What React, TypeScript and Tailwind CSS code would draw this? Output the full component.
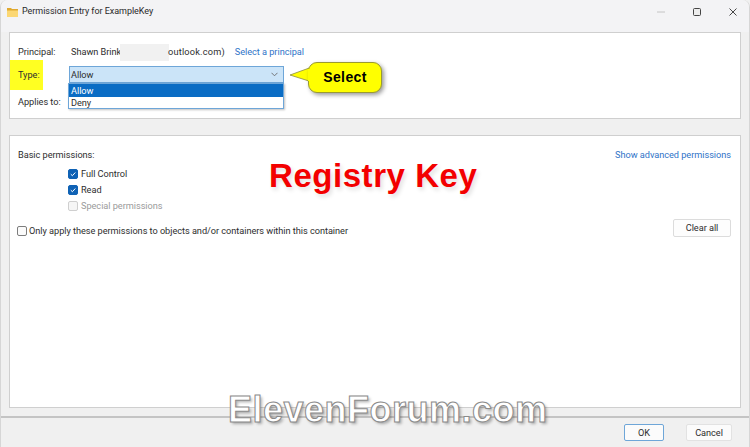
import React from "react";

const font = "font-['Roboto','Noto_Sans',sans-serif]";

const Check = ({ checked, disabled }: { checked?: boolean; disabled?: boolean }) => (
  <span
    className={`flex h-[10px] w-[10px] shrink-0 items-center justify-center rounded-[2px] border ${
      checked ? "border-[#0f62b5] bg-[#0f62b5]" : disabled ? "border-[#cfcfcf] bg-[#f6f6f6]" : "border-[#7d7d7d] bg-[#fbfbfb]"
    }`}
  >
    {checked && (
      <svg width="8" height="8" viewBox="0 0 8 8" fill="none">
        <path d="M1.8 4.2 3.4 5.7 6.3 2.5" stroke="#fff" strokeWidth="1" />
      </svg>
    )}
  </span>
);

const TitleBar = () => (
  <div className="flex h-[32px] items-center rounded-t-[7px] bg-[#f3f3f5] pb-[8px] pl-[6px] pr-[12px]">
    <svg width="11" height="9" viewBox="0 0 11 9" className="mr-[4px]">
      <path d="M0 0h4l1 1h6v2H0z" fill="#e0a92f" />
      <path d="M0 2.5h11V9H0z" fill="#fbd774" />
    </svg>
    <span className="text-[9px] text-[#2a2a2a]">Permission Entry for ExampleKey</span>
    <div className="ml-auto flex items-center">
      <svg width="8" height="2" viewBox="0 0 8 2" className="mr-[28px]">
        <path d="M0 1h8" stroke="#c4c4c4" strokeWidth="1" />
      </svg>
      <svg width="8" height="8" viewBox="0 0 8 8" className="mr-[28px]">
        <rect x="0.5" y="0.5" width="7" height="7" rx="1" fill="#ececec" stroke="#444" strokeWidth="1" />
      </svg>
      <svg width="8" height="8" viewBox="0 0 8 8">
        <path d="M0.5 0.5 7.5 7.5M7.5 0.5 0.5 7.5" stroke="#333" strokeWidth="0.9" />
      </svg>
    </div>
  </div>
);

export default function App() {
  return (
    <div className={`relative h-[447px] w-[750px] overflow-hidden bg-[#f0f0f0] text-[9.2px] tracking-[-0.04px] text-[#2e2e2e] ${font}`}>
      <div className="flex h-full flex-col rounded-t-[7px] border-x border-[#d6d6d6]">
        <TitleBar />

        <section className="mx-[8px] h-[87px] border border-[#cfcfcf] bg-white pl-[8px] pt-[12px]">
          <div className="flex h-[14px] items-center whitespace-nowrap">
            <span className="w-[53px]">Principal:</span>
            <span className="w-[49px]">Shawn Brink</span>
            <span className="h-[17px] w-[49px] bg-[#f1f1f1]" />
            <span className="-ml-[1px] tracking-[0.2px]">outlook.com)</span>
            <span className="ml-[10px] text-[#2f74c8]">Select a principal</span>
          </div>
          <div className="mt-[7px] flex h-[17px] items-center">
            <span className="w-[51px]">Type:</span>
            <div className="flex h-[17px] w-[215px] items-center justify-between border border-[#6ea6d8] bg-[#cbe4f8] pl-[1px] pr-[5px]">
              <span>Allow</span>
              <svg width="7" height="5" viewBox="0 0 7 5" fill="none">
                <path d="M0.5 0.8 3.5 3.8 6.5 0.8" stroke="#6a6a6a" strokeWidth="0.9" />
              </svg>
            </div>
          </div>
          <div className="mt-[12px] flex h-[14px] items-center">
            <span>Applies to:</span>
          </div>
        </section>

        <section className="mx-[8px] mt-[16px] h-[273px] border border-[#cfcfcf] bg-white pl-[8px] pr-[9px] pt-[12px]">
          <div className="flex h-[14px] items-center justify-between">
            <span>Basic permissions:</span>
            <span className="text-[#2f74c8]">Show advanced permissions</span>
          </div>
          <div className="ml-[50px] mt-[5px] flex flex-col gap-[3px]">
            <label className="flex h-[13px] items-center gap-[3px]">
              <Check checked />
              <span>Full Control</span>
            </label>
            <label className="flex h-[13px] items-center gap-[3px]">
              <Check checked />
              <span>Read</span>
            </label>
            <label className="flex h-[13px] items-center gap-[3px] text-[#9b9b9b]">
              <Check disabled />
              <span>Special permissions</span>
            </label>
          </div>
          <div className="mt-[7px] flex items-start justify-between">
            <label className="-ml-[1px] mt-[5px] flex items-center gap-[2px]">
              <Check />
              <span>Only apply these permissions to objects and/or containers within this container</span>
            </label>
            <button className="flex h-[18px] w-[58px] items-center justify-center rounded-[2px] border border-[#dcdcdc] bg-[#fdfdfd]">
              Clear all
            </button>
          </div>
        </section>

        <footer className="mt-[8px] flex flex-1 items-start justify-end gap-[22px] border-t-2 border-[#c4c4c4] pr-[17px] pt-[6px]">
          <button className="flex h-[17px] w-[40px] items-center justify-center rounded-[2px] border border-[#6ea6d8] bg-[#fbfbfb]">
            OK
          </button>
          <button className="flex h-[17px] w-[46px] items-center justify-center rounded-[2px] border border-[#e2e2e2] bg-[#fbfbfb]">
            Cancel
          </button>
        </footer>
      </div>

      {/* annotations drawn over the dialog */}
      <div className="absolute left-[10px] top-[60px] flex h-[30px] w-[33px] items-center bg-[#ffff22] pl-[8px]">
        <span>Type:</span>
      </div>

      <div className="absolute left-[68px] top-[83px] flex h-[26px] w-[216px] flex-col border border-[#6ea6d8] bg-white shadow-[1px_1px_2px_rgba(0,0,0,0.25)]">
        <div className="flex h-[13px] items-center bg-[#0a6cc4] pl-[2px] text-white">Allow</div>
        <div className="flex h-[12px] items-center pl-[2px]">Deny</div>
      </div>

      <svg width="24" height="22" viewBox="0 0 24 22" className="absolute left-[289px] top-[64px]">
        <path d="M23 3 1 11 23 18Z" fill="#ffff00" stroke="#8a8a40" strokeWidth="0.8" />
      </svg>
      <div className="absolute left-[308px] top-[62px] flex h-[31px] w-[74px] items-center justify-center rounded-[9px] border border-[#9a9a30] bg-[#ffff00] font-['Liberation_Sans',sans-serif] text-[14px] font-bold tracking-[0.4px] text-black shadow-[2px_2px_4px_rgba(0,0,0,0.4)]">
        Select
      </div>
      <svg width="6" height="12" viewBox="0 0 6 12" className="absolute left-[308px] top-[69px]">
        <rect width="6" height="12" fill="#ffff00" />
      </svg>

      <div className="absolute left-[269px] top-[156px] font-['Liberation_Sans',sans-serif] text-[33px] font-bold leading-[40px] tracking-[0.55px] text-[#f30000] [text-shadow:2px_3px_4px_rgba(0,0,0,0.12)]">
        Registry Key
      </div>

      <div className="absolute left-[228px] top-[388px] font-['Liberation_Sans',sans-serif] text-[36px] font-bold leading-[44px] tracking-[0.5px] text-white [-webkit-text-stroke:1px_#8a8a8a] [text-shadow:2px_2px_3px_rgba(0,0,0,0.3)]">
        ElevenForum.com
      </div>
    </div>
  );
}
